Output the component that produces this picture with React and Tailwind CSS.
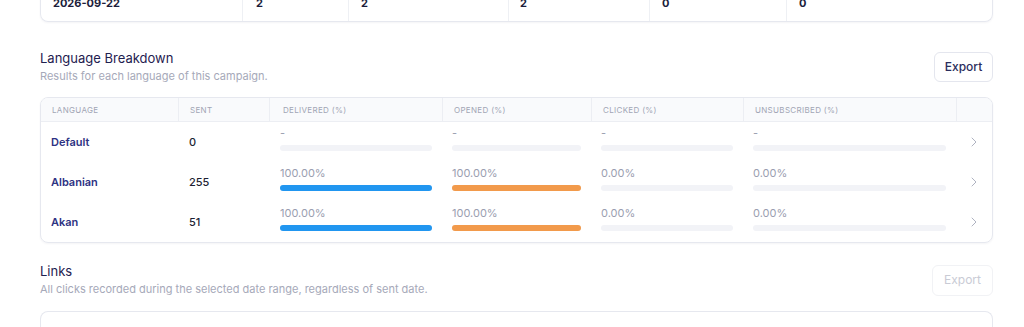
import React from "react";
import { ChevronRight } from "lucide-react";

const languages = [
  { name: "Default", sent: "0", delivered: null, opened: null, clicked: null, unsub: null },
  { name: "Albanian", sent: "255", delivered: 100, opened: 100, clicked: 0, unsub: 0 },
  { name: "Akan", sent: "51", delivered: 100, opened: 100, clicked: 0, unsub: 0 },
];

const Bar = ({ value, color }) => {
  return (
    <div className="flex flex-col pt-[4px]">
      <span className="text-[11px] leading-[14px] text-[#9a9eb0]">
        {value === null ? "-" : value.toFixed(2) + "%"}
      </span>
      <div className="mt-[5px] h-[6px] w-full rounded-full bg-[#f2f3f7]">
        {value ? (
          <div className={`h-full rounded-full ${color}`} style={{ width: value + "%" }}></div>
        ) : null}
      </div>
    </div>
  );
};

const SectionHeader = ({ title, subtitle, disabled }) => {
  return (
    <div className="flex items-center justify-between">
      <div className="flex flex-col">
        <div className="text-[13px] leading-[16px] text-[#1f2150]">{title}</div>
        <div className="mt-[3px] text-[11px] leading-[15px] text-[#a6a9b9]">{subtitle}</div>
      </div>
      <button
        className={
          disabled
            ? "h-[31px] w-[61px] rounded-md border border-[#f1f2f5] text-[12px] text-[#c9cbd5]"
            : "h-[30px] w-[59px] rounded-md border border-[#e4e6ee] text-[12px] font-medium text-[#2a2d5c]"
        }
      >
        Export
      </button>
    </div>
  );
};

const App = () => {
  const cols = "grid grid-cols-[137px_91px_173px_149px_152px_213px_1fr]";

  return (
    <div className="h-[327px] overflow-hidden bg-white px-[40px] font-['Inter',sans-serif] w-[1033px]">
      {/* previous table, only its last row is visible */}
      <div className="-mt-[15px] rounded-b-lg border border-t-0 border-[#e6e8ef] shadow-[0_1px_2px_rgba(30,30,80,0.05)] grid grid-cols-[201px_106px_160px_141px_137px_1fr] text-[11px] font-bold text-[#1c1d3b] w-[953px]">
        <div className="flex h-[36px] items-center px-3">2026-09-22</div>
        <div className="flex h-[36px] items-center border-l border-[#eef0f4] px-[13px]">2</div>
        <div className="flex h-[36px] items-center border-l border-[#eef0f4] px-3">2</div>
        <div className="flex h-[36px] items-center border-l border-[#eef0f4] px-[11px]">2</div>
        <div className="flex h-[36px] items-center border-l border-[#eef0f4] px-3">0</div>
        <div className="flex h-[36px] items-center border-l border-[#eef0f4] px-3">0</div>
      </div>

      <div className="mt-[28px] w-[953px]">
        <SectionHeader
          title="Language Breakdown"
          subtitle="Results for each language of this campaign."
        />
      </div>

      <div className="mt-[13px] w-[953px] overflow-hidden rounded-lg border border-[#e6e8ef] shadow-[0_1px_2px_rgba(30,30,80,0.05)]">
        <div className={`${cols} h-[24px] border-b border-[#eceef3] bg-[#f9fafc] text-[8px] uppercase tracking-[0.04em] text-[#a1a5b4]`}>
          <div className="flex items-center px-[11px]">Language</div>
          <div className="flex items-center border-l border-[#eceef3] px-[11px]">Sent</div>
          <div className="flex items-center border-l border-[#eceef3] px-[13px]">Delivered (%)</div>
          <div className="flex items-center border-l border-[#eceef3] px-[11px]">Opened (%)</div>
          <div className="flex items-center border-l border-[#eceef3] px-[11px]">Clicked (%)</div>
          <div className="flex items-center border-l border-[#eceef3] px-[11px]">Unsubscribed (%)</div>
          <div className="border-l border-[#eceef3]"></div>
        </div>
        {languages.map((l) => (
          <div key={l.name} className={`${cols} h-[40px]`}>
            <div className="flex items-center px-[10px] text-[11px] font-semibold text-[#2d3282]">{l.name}</div>
            <div className="flex items-center px-[11px] text-[11px] font-medium text-[#1d1f33]">{l.sent}</div>
            <div className="pl-[11px] pr-[10px]">
              <Bar value={l.delivered} color="bg-[#2196f0]" />
            </div>
            <div className="px-[10px]">
              <Bar value={l.opened} color="bg-[#f29a4b]" />
            </div>
            <div className="px-[10px]">
              <Bar value={l.clicked} color="bg-[#2196f0]" />
            </div>
            <div className="px-[10px]">
              <Bar value={l.unsub} color="bg-[#2196f0]" />
            </div>
            <div className="flex items-center justify-center">
              <ChevronRight size={16} strokeWidth={1.4} className="text-[#a9adbc]" />
            </div>
          </div>
        ))}
      </div>

      <div className="mt-[20px] w-[953px]">
        <SectionHeader
          title="Links"
          subtitle="All clicks recorded during the selected date range, regardless of sent date."
          disabled
        />
      </div>

      <div className="mt-[14px] h-[40px] w-[953px] rounded-t-lg border border-b-0 border-[#e6e8ef]"></div>
    </div>
  );
};

export default App;
